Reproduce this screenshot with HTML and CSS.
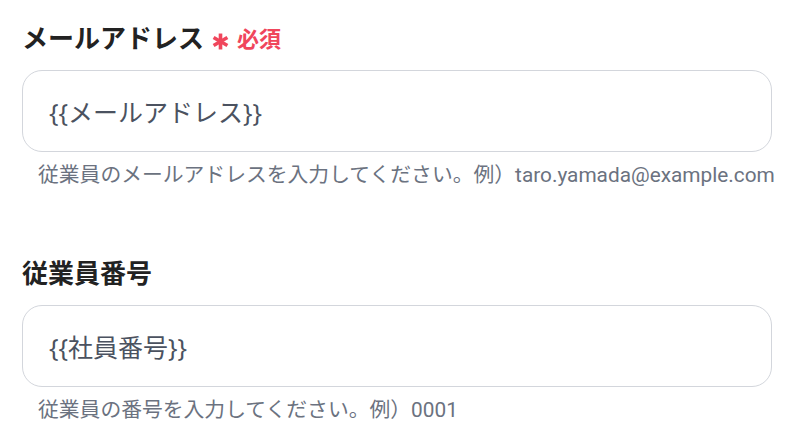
FILE: index.html
```html
<!DOCTYPE html>
<html lang="ja">
<head>
<meta charset="utf-8">
<link rel="stylesheet" href="styles.css">
</head>
<body>
<div class="form">
  <div class="field">
    <div class="label">メールアドレス<span class="req"><svg class="ast" viewBox="0 0 16 16" width="17" height="17" aria-hidden="true"><g stroke="#f0465c" stroke-width="3.4" stroke-linecap="butt"><line x1="8" y1="0.5" x2="8" y2="15.5"/><line x1="1.5" y1="4.25" x2="14.5" y2="11.75"/><line x1="1.5" y1="11.75" x2="14.5" y2="4.25"/></g></svg>必須</span></div>
    <div class="input">{{メールアドレス}}</div>
    <div class="help">従業員のメールアドレスを入力してください。例）taro.yamada@example.com</div>
  </div>
  <div class="field">
    <div class="label">従業員番号</div>
    <div class="input">{{社員番号}}</div>
    <div class="help">従業員の番号を入力してください。例）0001</div>
  </div>
</div>
</body>
</html>
```
FILE: styles.css
```css
* { box-sizing: border-box; }
html, body { margin: 0; padding: 0; background: #fff; }
body {
  font-family: "Noto Sans", "Noto Sans CJK JP", sans-serif;
  color: #1f1f1f;
}
.form {
  padding: 22px 23px 0 22px;
  display: flex;
  flex-direction: column;
  gap: 68px;
}
.field { display: flex; flex-direction: column; }
.label {
  font-size: 26px;
  font-weight: 700;
  line-height: 32px;
  height: 32px;
  color: #222;
  display: flex;
  align-items: center;
}
.req {
  color: #f0465c;
  font-size: 22px;
  font-weight: 700;
  margin-left: 8px;
  display: flex;
  align-items: center;
}
.ast {
  margin-right: 8px;
  position: relative;
  top: 3px;
}
.input {
  margin-top: 16px;
  height: 82px;
  border: 1px solid #d3d6dc;
  border-radius: 20px;
  padding: 0 26px;
  display: flex;
  align-items: center;
  font-size: 25px;
  color: #4b5260;
}
.help {
  margin-top: 9px;
  font-family: Roboto, "Noto Sans CJK JP", sans-serif;
  font-size: 20.8px;
  line-height: 28px;
  color: #6b7280;
  padding-left: 16px;
  white-space: nowrap;
}
```
